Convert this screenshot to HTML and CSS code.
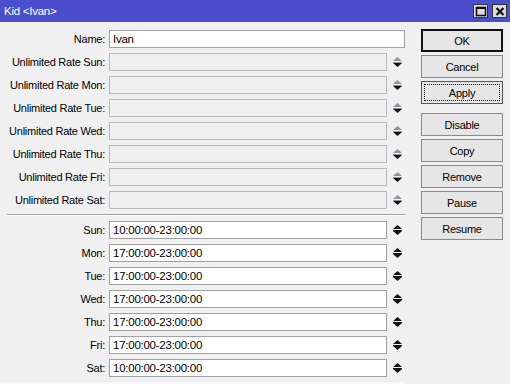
FILE: index.html
```html
<!DOCTYPE html>
<html lang="en">
<head>
    <meta charset="UTF-8">
    <title>Kid &lt;Ivan&gt;</title>
    <link rel="stylesheet" href="styles.css">
</head>
<body>
    <div class="window">
        <div class="titlebar">
            <span class="title">Kid &lt;Ivan&gt;</span>
            <div class="title-buttons">
                <span class="tbtn">
                    <svg width="12" height="11" viewBox="0 0 12 11"><rect x="1.5" y="1.5" width="9" height="8" fill="none" stroke="#111" stroke-width="1.6"/><rect x="1" y="1" width="10" height="2" fill="#111"/></svg>
                </span>
                <span class="tbtn">
                    <svg width="12" height="11" viewBox="0 0 12 11"><path d="M2.5 2 L9.5 9 M9.5 2 L2.5 9" stroke="#111" stroke-width="2.2"/></svg>
                </span>
            </div>
        </div>

        <div class="content">
            <div class="form">
                <div class="row">
                    <label class="label">Name:</label>
                    <div class="field wide">Ivan</div>
                </div>

                <div class="row">
                    <label class="label">Unlimited Rate Sun:</label>
                    <div class="field disabled"></div>
                    <svg class="spin" viewBox="0 0 9 11"><path d="M4.5 0 L9 4 L0 4 Z" fill="#8c9898"/><path d="M0 6 L9 6 L4.5 10 Z" fill="#111"/><rect x="0" y="5" width="9" height="1" fill="#8c9898"/></svg>
                </div>
                <div class="row">
                    <label class="label">Unlimited Rate Mon:</label>
                    <div class="field disabled"></div>
                    <svg class="spin" viewBox="0 0 9 11"><path d="M4.5 0 L9 4 L0 4 Z" fill="#8c9898"/><path d="M0 6 L9 6 L4.5 10 Z" fill="#111"/><rect x="0" y="5" width="9" height="1" fill="#8c9898"/></svg>
                </div>
                <div class="row">
                    <label class="label">Unlimited Rate Tue:</label>
                    <div class="field disabled"></div>
                    <svg class="spin" viewBox="0 0 9 11"><path d="M4.5 0 L9 4 L0 4 Z" fill="#8c9898"/><path d="M0 6 L9 6 L4.5 10 Z" fill="#111"/><rect x="0" y="5" width="9" height="1" fill="#8c9898"/></svg>
                </div>
                <div class="row">
                    <label class="label">Unlimited Rate Wed:</label>
                    <div class="field disabled"></div>
                    <svg class="spin" viewBox="0 0 9 11"><path d="M4.5 0 L9 4 L0 4 Z" fill="#8c9898"/><path d="M0 6 L9 6 L4.5 10 Z" fill="#111"/><rect x="0" y="5" width="9" height="1" fill="#8c9898"/></svg>
                </div>
                <div class="row">
                    <label class="label">Unlimited Rate Thu:</label>
                    <div class="field disabled"></div>
                    <svg class="spin" viewBox="0 0 9 11"><path d="M4.5 0 L9 4 L0 4 Z" fill="#8c9898"/><path d="M0 6 L9 6 L4.5 10 Z" fill="#111"/><rect x="0" y="5" width="9" height="1" fill="#8c9898"/></svg>
                </div>
                <div class="row">
                    <label class="label">Unlimited Rate Fri:</label>
                    <div class="field disabled"></div>
                    <svg class="spin" viewBox="0 0 9 11"><path d="M4.5 0 L9 4 L0 4 Z" fill="#8c9898"/><path d="M0 6 L9 6 L4.5 10 Z" fill="#111"/><rect x="0" y="5" width="9" height="1" fill="#8c9898"/></svg>
                </div>
                <div class="row">
                    <label class="label">Unlimited Rate Sat:</label>
                    <div class="field disabled"></div>
                    <svg class="spin" viewBox="0 0 9 11"><path d="M4.5 0 L9 4 L0 4 Z" fill="#8c9898"/><path d="M0 6 L9 6 L4.5 10 Z" fill="#111"/><rect x="0" y="5" width="9" height="1" fill="#8c9898"/></svg>
                </div>

                <div class="separator"></div>

                <div class="row">
                    <label class="label">Sun:</label>
                    <div class="field">10:00:00-23:00:00</div>
                    <svg class="spin" viewBox="0 0 9 11"><path d="M4.5 0 L9 4 L0 4 Z" fill="#111"/><path d="M0 6 L9 6 L4.5 10 Z" fill="#111"/><rect x="0" y="5" width="9" height="1" fill="#111"/></svg>
                </div>
                <div class="row">
                    <label class="label">Mon:</label>
                    <div class="field">17:00:00-23:00:00</div>
                    <svg class="spin" viewBox="0 0 9 11"><path d="M4.5 0 L9 4 L0 4 Z" fill="#111"/><path d="M0 6 L9 6 L4.5 10 Z" fill="#111"/><rect x="0" y="5" width="9" height="1" fill="#111"/></svg>
                </div>
                <div class="row">
                    <label class="label">Tue:</label>
                    <div class="field">17:00:00-23:00:00</div>
                    <svg class="spin" viewBox="0 0 9 11"><path d="M4.5 0 L9 4 L0 4 Z" fill="#111"/><path d="M0 6 L9 6 L4.5 10 Z" fill="#111"/><rect x="0" y="5" width="9" height="1" fill="#111"/></svg>
                </div>
                <div class="row">
                    <label class="label">Wed:</label>
                    <div class="field">17:00:00-23:00:00</div>
                    <svg class="spin" viewBox="0 0 9 11"><path d="M4.5 0 L9 4 L0 4 Z" fill="#111"/><path d="M0 6 L9 6 L4.5 10 Z" fill="#111"/><rect x="0" y="5" width="9" height="1" fill="#111"/></svg>
                </div>
                <div class="row">
                    <label class="label">Thu:</label>
                    <div class="field">17:00:00-23:00:00</div>
                    <svg class="spin" viewBox="0 0 9 11"><path d="M4.5 0 L9 4 L0 4 Z" fill="#111"/><path d="M0 6 L9 6 L4.5 10 Z" fill="#111"/><rect x="0" y="5" width="9" height="1" fill="#111"/></svg>
                </div>
                <div class="row">
                    <label class="label">Fri:</label>
                    <div class="field">17:00:00-23:00:00</div>
                    <svg class="spin" viewBox="0 0 9 11"><path d="M4.5 0 L9 4 L0 4 Z" fill="#111"/><path d="M0 6 L9 6 L4.5 10 Z" fill="#111"/><rect x="0" y="5" width="9" height="1" fill="#111"/></svg>
                </div>
                <div class="row">
                    <label class="label">Sat:</label>
                    <div class="field">10:00:00-23:00:00</div>
                    <svg class="spin" viewBox="0 0 9 11"><path d="M4.5 0 L9 4 L0 4 Z" fill="#111"/><path d="M0 6 L9 6 L4.5 10 Z" fill="#111"/><rect x="0" y="5" width="9" height="1" fill="#111"/></svg>
                </div>
            </div>

            <div class="buttons">
                <button class="btn default">OK</button>
                <button class="btn">Cancel</button>
                <button class="btn focused"><span>Apply</span></button>
                <button class="btn group">Disable</button>
                <button class="btn">Copy</button>
                <button class="btn">Remove</button>
                <button class="btn">Pause</button>
                <button class="btn">Resume</button>
            </div>
        </div>

        <div class="footer"></div>
    </div>
</body>
</html>
```

FILE: styles.css
```css
body {
    margin: 0;
    padding: 0;
    font-family: "Liberation Sans", Arial, sans-serif;
    font-size: 11px;
    letter-spacing: -0.25px;
    color: #000;
}

.window {
    width: 510px;
    height: 384px;
    background-color: #f0f0f0;
    display: flex;
    flex-direction: column;
    overflow: hidden;
}

.titlebar {
    height: 22px;
    background-color: #4b4fce;
    display: flex;
    align-items: center;
    justify-content: space-between;
    flex-shrink: 0;
}

.title {
    color: #fff;
    font-size: 11.5px;
    padding-left: 4px;
    padding-bottom: 1px;
}

.title-buttons {
    display: flex;
    gap: 4px;
    margin-right: 3px;
}

.tbtn {
    width: 13px;
    height: 12px;
    background-color: #dcdcdc;
    border: 1px solid #333;
    display: flex;
    align-items: center;
    justify-content: center;
}

.content {
    flex: 1;
    display: flex;
}

.form {
    width: 405px;
    padding-top: 8px;
    display: flex;
    flex-direction: column;
    gap: 5px;
}

.row {
    display: flex;
    align-items: center;
    height: 18px;
}

.label {
    width: 105px;
    padding-right: 4px;
    text-align: right;
    flex-shrink: 0;
}

.field {
    box-sizing: border-box;
    width: 278px;
    height: 18px;
    border: 1px solid #a0a0a0;
    background-color: #fff;
    padding: 0 0 0 3px;
    line-height: 16px;
    font-size: 11.5px;
}

.field.wide {
    width: 296px;
}

.field.disabled {
    background-color: #f0f0f0;
    border-color: #b9b9b9;
}

.spin {
    width: 9px;
    height: 11px;
    margin-left: 6px;
}

.separator {
    height: 1px;
    margin-left: 7px;
    border-top: 1px solid #a0a0a0;
    background-color: #fff;
}

.buttons {
    margin-left: 16px;
    width: 82px;
    padding-top: 7px;
    display: flex;
    flex-direction: column;
    gap: 3px;
}

.btn {
    box-sizing: border-box;
    height: 23px;
    border: 1px solid #8a8a8a;
    background-color: #e6e6e6;
    font-family: "Liberation Sans", Arial, sans-serif;
    font-size: 11px;
    letter-spacing: -0.25px;
    color: #000;
    padding: 0;
}

.btn.default {
    border: 2px solid #111;
}

.btn.focused {
    border-color: #555;
    padding: 2px;
}

.btn.focused span {
    display: flex;
    align-items: center;
    justify-content: center;
    height: 100%;
    border: 1px dotted #111;
    box-sizing: border-box;
}

.btn.group {
    margin-top: 6px;
}

.footer {
    width: 405px;
    height: 2px;
    background-color: #f8f8f8;
    flex-shrink: 0;
}
```
